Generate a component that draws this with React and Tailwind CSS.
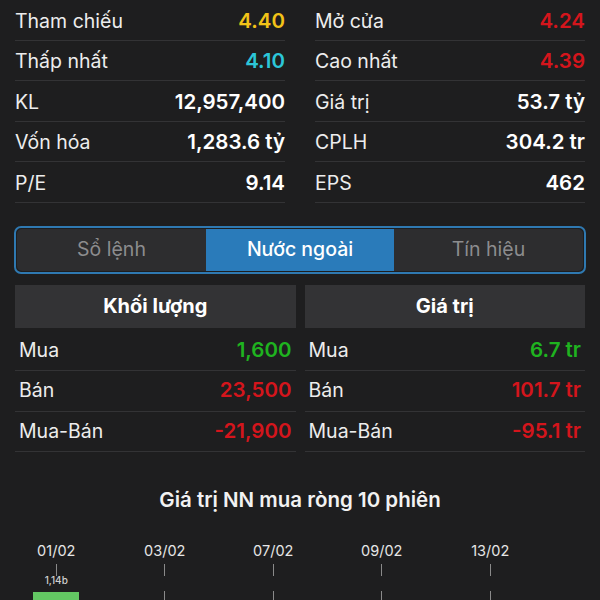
import React from "react";

const top = [
  [["Tham chiếu", "4.40", "text-[#f2c318]"], ["Mở cửa", "4.24", "text-[#d4151c]"]],
  [["Thấp nhất", "4.10", "text-[#2cc6d8]"], ["Cao nhất", "4.39", "text-[#d4151c]"]],
  [["KL", "12,957,400", "text-white"], ["Giá trị", "53.7 tỷ", "text-white"]],
  [["Vốn hóa", "1,283.6 tỷ", "text-white"], ["CPLH", "304.2 tr", "text-white"]],
  [["P/E", "9.14", "text-white"], ["EPS", "462", "text-white"]],
];

const foreign = [
  [["Mua", "1,600", "text-[#1fb31f]"], ["Mua", "6.7 tr", "text-[#1fb31f]"]],
  [["Bán", "23,500", "text-[#d4151c]"], ["Bán", "101.7 tr", "text-[#d4151c]"]],
  [["Mua-Bán", "-21,900", "text-[#d4151c]"], ["Mua-Bán", "-95.1 tr", "text-[#d4151c]"]],
];

function TopRow({ label, value, color }) {
  return (
    <div className="h-[40.5px] pt-[3px] flex items-center justify-between border-b border-[#333335]">
      <span className="text-[19.5px] text-[#ededed]">{label}</span>
      <span className={`text-[20.5px] font-semibold ${color}`}>{value}</span>
    </div>
  );
}

function DataRow({ label, value, color }) {
  return (
    <div className="h-[40.5px] flex items-center justify-between border-b border-[#333335] px-[4px]">
      <span className="text-[19.5px] text-[#ededed]">{label}</span>
      <span className={`text-[20.5px] font-semibold ${color}`}>{value}</span>
    </div>
  );
}

const dates = ["01/02", "03/02", "07/02", "09/02", "13/02", ""];

export default function App() {
  return (
    <div
      className="w-[600px] h-[600px] overflow-hidden bg-[#1e1e1f] text-white"
      style={{ fontFamily: "Inter, 'Noto Sans', sans-serif" }}
    >
      <div className="grid grid-cols-2 gap-x-[30px] px-[15px]">
        <div>
          {top.map((r, i) => (
            <TopRow key={i} label={r[0][0]} value={r[0][1]} color={r[0][2]} />
          ))}
        </div>
        <div>
          {top.map((r, i) => (
            <TopRow key={i} label={r[1][0]} value={r[1][1]} color={r[1][2]} />
          ))}
        </div>
      </div>

      <div className="mx-[14px] mt-[23px] h-[48px] rounded-[7px] border-2 border-[#2f79b1] p-[1px] flex">
        <div className="flex-1 rounded-l-[5px] bg-[#2d2d2f] flex items-center justify-center text-[19.5px] text-[#8c8c8e]">
          Sổ lệnh
        </div>
        <div className="w-[188px] bg-[#2a7bba] flex items-center justify-center text-[19.5px] text-white font-medium">
          Nước ngoài
        </div>
        <div className="flex-1 rounded-r-[5px] bg-[#2d2d2f] flex items-center justify-center text-[19.5px] text-[#8c8c8e]">
          Tín hiệu
        </div>
      </div>

      <div className="grid grid-cols-2 gap-x-[9px] px-[15px] mt-[11px]">
        <div>
          <div className="h-[43px] bg-[#333335] flex items-center justify-center text-[20px] font-bold">
            Khối lượng
          </div>
          <div className="mt-[3px]">
            {foreign.map((r, i) => (
              <DataRow key={i} label={r[0][0]} value={r[0][1]} color={r[0][2]} />
            ))}
          </div>
        </div>
        <div>
          <div className="h-[43px] bg-[#333335] flex items-center justify-center text-[20px] font-bold">
            Giá trị
          </div>
          <div className="mt-[3px]">
            {foreign.map((r, i) => (
              <DataRow key={i} label={r[1][0]} value={r[1][1]} color={r[1][2]} />
            ))}
          </div>
        </div>
      </div>

      <div className="mt-[33px] text-center text-[20.5px] font-semibold text-[#f2f2f2]">
        Giá trị NN mua ròng 10 phiên
      </div>

      <div className="flex pl-[2px] mt-[26px]">
        {dates.map((d, i) => (
          <div key={i} className="w-[108.5px] shrink-0 flex flex-col items-center">
            <div className="h-[18px] text-[14.5px] leading-[18px] text-[#e6e6e6]">{d}</div>
            {d && (
              <div className="mt-[4px] flex flex-col items-center">
                <div className="w-px h-[12px] bg-[#8a8a8a]" />
                {i === 0 ? (
                  <>
                    <div className="text-[10px] leading-[12px] font-medium text-[#d0d0d0] -mt-[2px]">1,14b</div>
                    <div className="mt-[6px] w-[46px] h-[20px] bg-[#63c763]" />
                  </>
                ) : (
                  <div className="mt-[15px] w-px h-[12px] bg-[#8a8a8a]" />
                )}
              </div>
            )}
          </div>
        ))}
      </div>
    </div>
  );
}
